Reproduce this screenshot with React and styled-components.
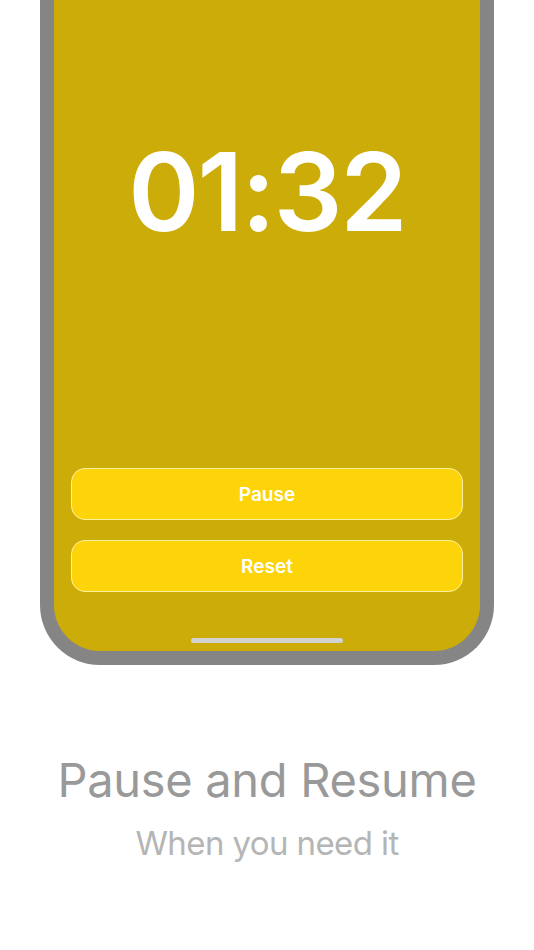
import styled, { createGlobalStyle } from "styled-components";

const Global = createGlobalStyle`
    html, body {
        margin: 0;
        padding: 0;
        background: #ffffff;
    }
    body {
        font-family: Inter, "Noto Sans", sans-serif;
        width: 534px;
        height: 950px;
        overflow: hidden;
    }
`;

const Page = styled.div`
    display: flex;
    flex-direction: column;
    align-items: center;
    width: 534px;
`;

const Frame = styled.div`
    width: 426px;
    height: 651px;
    border: 14px solid #858585;
    border-top: 0;
    border-radius: 0 0 60px 60px;
    background: #ccac08;
    display: flex;
    flex-direction: column;
    align-items: center;
    overflow: hidden;
`;

const Timer = styled.div`
    margin-top: 138px;
    font-size: 108px;
    line-height: 1;
    font-weight: 600;
    color: #ffffff;
    letter-spacing: -2px;
`;

const Buttons = styled.div`
    margin-top: auto;
    display: flex;
    flex-direction: column;
    gap: 20px;
    width: 392px;
`;

const Button = styled.button`
    height: 52px;
    border-radius: 14px;
    border: 1px solid #fff0a0;
    background: #fdd40a;
    color: #ffffff;
    font-family: Inter, sans-serif;
    font-size: 19px;
    font-weight: 600;
    cursor: pointer;
`;

const HomeBar = styled.div`
    width: 152px;
    height: 5px;
    border-radius: 3px;
    background: #d2d2d2;
    margin: 46px 0 8px;
`;

const Title = styled.h1`
    margin: 87px 0 0;
    font-size: 47px;
    line-height: 1.2;
    font-weight: 400;
    color: #999999;
    letter-spacing: -0.3px;
`;

const Subtitle = styled.p`
    margin: 16px 0 0;
    font-size: 33px;
    line-height: 1.2;
    font-weight: 400;
    color: #b5b5b5;
    letter-spacing: -0.6px;
`;

function App() {
    return (
        <Page>
            <Global />
            <Frame>
                <Timer>01:32</Timer>
                <Buttons>
                    <Button>Pause</Button>
                    <Button>Reset</Button>
                </Buttons>
                <HomeBar />
            </Frame>
            <Title>Pause and Resume</Title>
            <Subtitle>When you need it</Subtitle>
        </Page>
    );
}

export default App;
